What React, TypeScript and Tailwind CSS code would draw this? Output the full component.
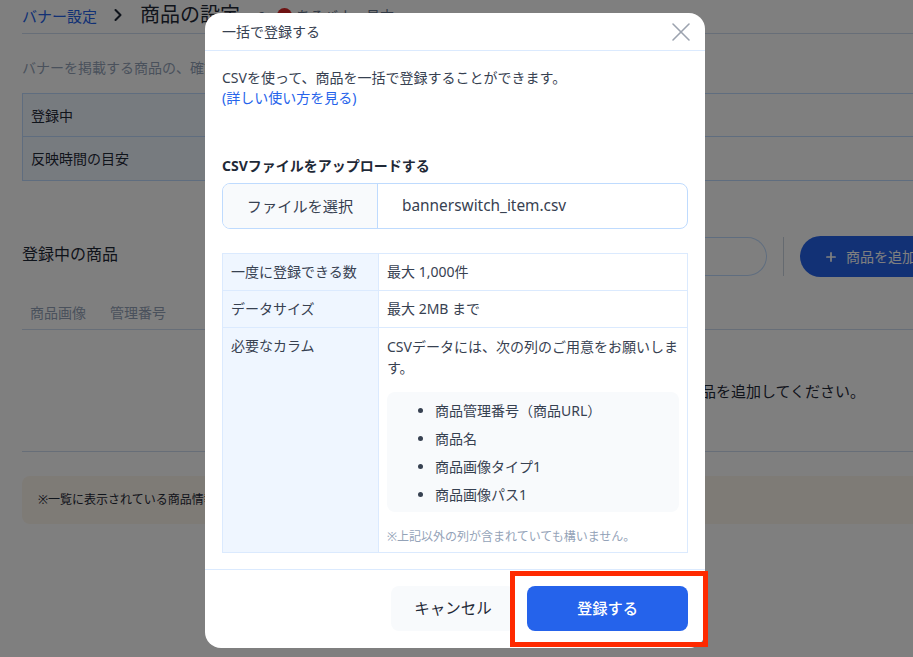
import React from "react";
import { X, Plus, ChevronRight } from "lucide-react";

const font = "font-['Noto_Sans','Noto_Sans_CJK_JP',sans-serif]";

function Background() {
  return (
    <div className="flex h-[657px] w-[913px] flex-col overflow-hidden bg-white pl-[22px] text-[#1f2937]">
      <div className="flex h-[34px] shrink-0 items-center border-b border-[#cfdcf0] pb-[4px]">
        <span className="mt-[3px] text-[15px] text-[#2563eb]">バナー設定</span>
        <ChevronRight className="ml-[11px] h-5 w-5 text-[#1f2937]" strokeWidth={2.5} />
        <span className="ml-[12px] text-[20px] leading-none">商品の設定</span>
        <span className="ml-[18px] text-[12px] text-[#64748b]">〜</span>
        <span className="ml-[7px] mt-[1px] h-[15px] w-[15px] rounded-full bg-[#dc2626]" />
        <span className="ml-[4px] mt-[1px] text-[14px] text-[#64748b]">あるバナー見本</span>
      </div>
      <p className="mt-[24px] text-[14px] leading-5 text-[#94a3b8]">バナーを掲載する商品の、確認ができます。</p>
      <div className="mt-[15px] border border-r-0 border-[#bfdbfe] text-[14px]">
        <div className="flex h-[43px] items-center border-b border-[#bfdbfe]">
          <span className="flex h-full w-[200px] items-center bg-[#eff6ff] pl-2">登録中</span>
        </div>
        <div className="flex h-[43px] items-center">
          <span className="flex h-full w-[200px] items-center bg-[#eff6ff] pl-2">反映時間の目安</span>
        </div>
      </div>
      <div className="mt-[55px] flex items-start">
        <span className="mt-[6px] w-[650px] shrink-0 text-[16px] leading-6">登録中の商品</span>
        <div className="ml-[25px] mt-[1px] h-[39px] w-[70px] shrink-0 rounded-r-full border border-l-0 border-[#bfdbfe]" />
        <div className="ml-[16px] mt-[1px] h-[39px] w-px shrink-0 bg-[#cbd5e1]" />
        <div className="ml-[16px] flex h-[41px] w-[160px] shrink-0 items-center rounded-l-full bg-[#2563eb] pl-[24px] text-[14px] text-white">
          <Plus className="mr-[8px] h-[14px] w-[14px] shrink-0" strokeWidth={3} />
          <span className="whitespace-nowrap">商品を追加</span>
        </div>
      </div>
      <div className="mt-[21px] flex h-[32px] shrink-0 items-center gap-[24px] border-b border-[#cfdcf0] pb-[3px] pl-2 text-[14px] text-[#94a3b8]">
        <span>商品画像</span>
        <span>管理番号</span>
      </div>
      <div className="flex h-[122px] shrink-0 items-center justify-end whitespace-nowrap border-b border-[#cfdcf0] pr-[48px] pt-[2px] text-[15px]">
        品を追加してください。
      </div>
      <div className="mt-[24px] flex h-[48px] shrink-0 items-center rounded-l-lg bg-[#fdf6ec] pl-4 text-[12px]">
        ※一覧に表示されている商品情報
      </div>
    </div>
  );
}

const Cell = ({ children, className = "" }: { children: React.ReactNode; className?: string }) => (
  <div className={`flex border-[#dbeafe] ${className}`}>{children}</div>
);

export default function App() {
  return (
    <div className={`relative h-[657px] w-[913px] overflow-hidden ${font}`}>
      <Background />
      <div className="absolute inset-0 bg-black/50" />
      <div className="absolute left-[205px] top-[13px] flex h-[635px] w-[500px] flex-col rounded-2xl bg-white text-[#374151]">
        <div className="flex h-[38px] shrink-0 items-center justify-between border-b border-[#dbeafe] pl-[17px] pr-[8px]">
          <span className="text-[14px]">一括で登録する</span>
          <X className="h-[32px] w-[32px] text-[#9ca3af]" strokeWidth={1.2} />
        </div>
        <div className="flex flex-1 flex-col px-[17px]">
          <p className="mt-[17px] text-[14px] leading-[20px]">CSVを使って、商品を一括で登録することができます。</p>
          <a className="text-[14px] leading-[20px] text-[#2563eb]">(詳しい使い方を見る)</a>
          <p className="mt-[48px] text-[14px] font-bold leading-[20px] text-[#1f2937]">CSVファイルをアップロードする</p>
          <div className="mt-[7px] flex h-[46px] overflow-hidden rounded-lg border border-[#bfdbfe]">
            <div className="flex w-[155px] shrink-0 items-center justify-center border-r border-[#bfdbfe] bg-[#f8fafc] text-[15.2px]">ファイルを選択</div>
            <div className="flex items-center pl-[24px] text-[15.4px]">bannerswitch_item.csv</div>
          </div>
          <div className="mt-[24px] border border-[#dbeafe] text-[14px] leading-[20px]">
            <Cell className="h-[37px] border-b">
              <div className="flex w-[156px] shrink-0 items-center border-r border-[#dbeafe] bg-[#eff6ff] pl-2">一度に登録できる数</div>
              <div className="flex items-center pl-2">最大 1,000件</div>
            </Cell>
            <Cell className="h-[37px] border-b">
              <div className="flex w-[156px] shrink-0 items-center border-r border-[#dbeafe] bg-[#eff6ff] pl-2">データサイズ</div>
              <div className="flex items-center pl-2">最大 2MB まで</div>
            </Cell>
            <Cell>
              <div className="w-[156px] shrink-0 border-r border-[#dbeafe] bg-[#eff6ff] pl-2 pt-[8px]">必要なカラム</div>
              <div className="flex-1 px-2 pb-[5px] pt-[8px]">
                <p className="leading-[21px]">CSVデータには、次の列のご用意をお願いします。</p>
                <ul className="mt-[14px] list-disc rounded-lg bg-[#f8fafc] pb-[3px] pl-[48px] pt-[5px]">
                  <li className="h-[28px] leading-[28px]">商品管理番号（商品URL）</li>
                  <li className="h-[28px] leading-[28px]">商品名</li>
                  <li className="h-[28px] leading-[28px]">商品画像タイプ1</li>
                  <li className="h-[28px] leading-[28px]">商品画像パス1</li>
                </ul>
                <p className="mt-[15px] text-[12px] leading-[20px] text-[#94a3b8]">※上記以外の列が含まれていても構いません。</p>
              </div>
            </Cell>
          </div>
        </div>
        <div className="flex h-[79px] shrink-0 items-start justify-end gap-[12px] border-t border-[#dbeafe] pr-[17px] pt-[16px]">
          <button className="h-[45px] w-[124px] rounded-lg bg-[#f8fafc] text-[15.5px] text-[#1f2937]">キャンセル</button>
          <button className="h-[45px] w-[161px] rounded-lg bg-[#2563eb] text-[15.3px] font-medium text-white">登録する</button>
        </div>
      </div>
      <div className="absolute left-[510px] top-[571px] h-[76px] w-[198px] border-[5px] border-[#ff2a00]" />
    </div>
  );
}
